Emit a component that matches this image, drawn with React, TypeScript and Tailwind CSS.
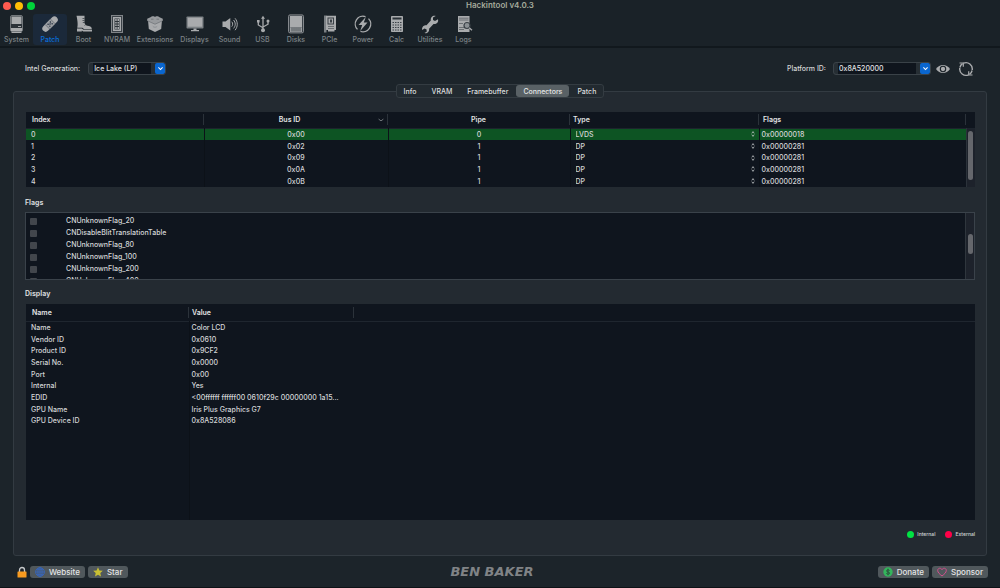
import { useState } from "react";
import type { ReactNode } from "react";
import { clsx } from "clsx";

const toolbarItems = [
  { label: "System", width: "w-[33px]", icon: <SystemIcon /> },
  { label: "Patch", width: "w-[34px]", icon: <PatchIcon /> },
  { label: "Boot", width: "w-[33px]", icon: <BootIcon /> },
  { label: "NVRAM", width: "w-[34px]", icon: <NvramIcon /> },
  { label: "Extensions", width: "w-[42px]", icon: <ExtensionsIcon /> },
  { label: "Displays", width: "w-[37px]", icon: <DisplaysIcon /> },
  { label: "Sound", width: "w-[33px]", icon: <SoundIcon /> },
  { label: "USB", width: "w-[33px]", icon: <UsbIcon /> },
  { label: "Disks", width: "w-[34px]", icon: <DisksIcon /> },
  { label: "PCIe", width: "w-[33px]", icon: <PcieIcon /> },
  { label: "Power", width: "w-[34px]", icon: <PowerIcon /> },
  { label: "Calc", width: "w-[33px]", icon: <CalcIcon /> },
  { label: "Utilities", width: "w-[34px]", icon: <UtilitiesIcon /> },
  { label: "Logs", width: "w-[33px]", icon: <LogsIcon /> },
];

const tabs = ["Info", "VRAM", "Framebuffer", "Connectors", "Patch"];

const connectors = [
  { index: 0, busId: "0x00", pipe: 0, type: "LVDS", flags: "0x00000018" },
  { index: 1, busId: "0x02", pipe: 1, type: "DP", flags: "0x00000281" },
  { index: 2, busId: "0x09", pipe: 1, type: "DP", flags: "0x00000281" },
  { index: 3, busId: "0x0A", pipe: 1, type: "DP", flags: "0x00000281" },
  { index: 4, busId: "0x0B", pipe: 1, type: "DP", flags: "0x00000281" },
];

const flags = [
  "CNUnknownFlag_20",
  "CNDisableBlitTranslationTable",
  "CNUnknownFlag_80",
  "CNUnknownFlag_100",
  "CNUnknownFlag_200",
  "CNUnknownFlag_400",
];

const displayInfo = [
  ["Name", "Color LCD"],
  ["Vendor ID", "0x0610"],
  ["Product ID", "0x9CF2"],
  ["Serial No.", "0x0000"],
  ["Port", "0x00"],
  ["Internal", "Yes"],
  ["EDID", "<00ffffff ffffff00 0610f29c 00000000 1a15..."],
  ["GPU Name", "Iris Plus Graphics G7"],
  ["GPU Device ID", "0x8A528086"],
];

function Glyph({ children }: { children: ReactNode }) {
  return (
    <svg viewBox="0 0 20 20" className="h-5 w-5" fill="#a9abad" aria-hidden="true">
      {children}
    </svg>
  );
}

function SystemIcon() {
  return (
    <Glyph>
      <rect x="3.5" y="1.5" width="12" height="16" rx="1.5" fill="#2b3238" stroke="#73787c" />
      <rect x="4.500" y="2.500" width="10" height="7.500" />
      <rect x="11" y="12" width="3" height="1" />
      <rect x="4" y="14" width="11" height="3" />
      <rect x="4.500" y="18" width="10" height="1" />
    </Glyph>
  );
}

function PatchIcon() {
  return (
    <Glyph>
      <g transform="rotate(-45 10 10)">
        <rect x="0.5" y="6.8" width="19" height="6.6" rx="3.2" />
        <rect x="6.2" y="6.8" width="7.6" height="6.6" fill="#9a9da1" />
        <path d="M6.2 6.8v6.6M13.8 6.8v6.6" stroke="#5d656e" strokeWidth="0.7" />
        <g fill="#1f2b3d">
          <circle cx="8.4" cy="8.9" r="0.7" />
          <circle cx="11.6" cy="8.9" r="0.7" />
          <circle cx="10" cy="10.1" r="0.7" />
          <circle cx="8.4" cy="11.4" r="0.7" />
          <circle cx="11.6" cy="11.4" r="0.7" />
        </g>
      </g>
    </Glyph>
  );
}

function BootIcon() {
  return (
    <Glyph>
      <path d="M2.5 1.800h8v7.2c.6 2 2 2.8 4.5 3 1.8.3 2.8 1.500 2.800 3.300h-7.500l-2-1.500H3.300c.6-3 .5-6-.8-12z" />
      <path d="M3 14.500h4.800l1.800 1.300H18v1.600H9.300l-1.500-1v1H3z" />
      <path d="M10.500 4.500h-2M10.500 6.500h-2M10.800 8.500h-2M11.800 10.500l-1.300 1" stroke="#2b3238" strokeWidth="0.700" />
    </Glyph>
  );
}

function NvramIcon() {
  return (
    <Glyph>
      <rect x="4.500" y="1.500" width="11" height="17" fill="#3a4147" stroke="#808488" />
      <path d="M6 3h8v14H6z" />
      <path d="M7.500 4.500h5v11h-5z" fill="#2b3238" />
      <path d="M8.200 5h1.500v2H8.200zM10.500 5H12v2h-1.500zM8.200 8h1.500v1.500H8.200zM10.500 8H12v1.500h-1.500zM8.200 10.500h1.500V12H8.200zM10.500 10.500H12V12h-1.500zM8.200 13h1.500v2H8.200zM10.500 13H12v2h-1.500z" />
    </Glyph>
  );
}

function ExtensionsIcon() {
  return (
    <Glyph>
      <path d="M3 6l7 3 7-3-.8 9L10 18l-6.200-3z" />
      <path d="M2.200 4.800l3.300-1.600L7 2.200h2l1 .8 1-.8h2l1.500 1 3.300 1.600v2L10 10.200 2.200 6.800z" fill="#989b9e" />
      <path d="M2.600 6.900L10 10.200l7.400-3.300" fill="none" stroke="#6b7074" strokeWidth="0.700" />
      <path d="M6 5.200h2.500M11.500 5.200H14" stroke="#6b7074" strokeWidth="0.800" />
      <path d="M7.800 12.300c1 1.300 3.400 1.300 4.400 0" fill="none" stroke="#858a8e" strokeWidth="0.800" />
    </Glyph>
  );
}

function DisplaysIcon() {
  return (
    <Glyph>
      <rect x="1.500" y="2.500" width="17" height="12" rx="0.800" fill="#7b8084" />
      <rect x="2.800" y="3.700" width="14.400" height="9" />
      <path d="M8.500 14.500h3v1.500h2.500v1.200H6V16h2.500z" />
    </Glyph>
  );
}

function SoundIcon() {
  return (
    <Glyph>
      <path d="M2.500 7.500h3L10.300 4v12.500L5.500 13h-3z" />
      <g fill="none" stroke="#a9abad" strokeWidth="1" strokeLinecap="round">
        <path d="M12 8c1 1.300 1 3 0 4.300" />
        <path d="M13.800 6.300c2 2.300 2 5.500 0 7.800" />
        <path d="M15.300 4.600c2.700 3.300 2.700 8 0 11.300" />
      </g>
    </Glyph>
  );
}

function UsbIcon() {
  return (
    <Glyph>
      <path d="M10 1.800l2 3H8zM4 6h2.600v2.600H4z" />
      <circle cx="15" cy="7" r="1.500" />
      <circle cx="10" cy="16.200" r="2" />
      <path d="M10 4v12M10 13.800L5.300 11V7.500M10 13l5-2.800V7" fill="none" stroke="#a9abad" strokeWidth="1.300" />
    </Glyph>
  );
}

function DisksIcon() {
  return (
    <Glyph>
      <rect x="2.500" y="0.900" width="15" height="18" rx="1.500" fill="#3a4147" stroke="#85898d" />
      <rect x="4" y="2" width="12" height="11.500" />
      <path d="M4 13.500h12v4.500H4z" fill="#9a9da0" />
      <path d="M6 13.500v4M8 13.500v4M10 13.500v4M12 13.500v4M14 13.500v4" stroke="#3a4147" strokeWidth="0.800" />
    </Glyph>
  );
}

function PcieIcon() {
  return (
    <Glyph>
      <path d="M4 1.500h2.500v17H4z" fill="#7b8084" />
      <path d="M6 1.800h10V16h-1.500v1.500H8V16H6z" />
      <rect x="8" y="4" width="5.500" height="6" fill="none" stroke="#3a4147" />
      <rect x="10" y="5.500" width="2" height="3" fill="#3a4147" />
      <path d="M8 12.500h6M8 14.500h6" stroke="#5a6065" strokeWidth="0.800" />
    </Glyph>
  );
}

function PowerIcon() {
  return (
    <Glyph>
      <path d="M12.500 2.700a7.700 7.700 0 0 0-8 12.700M7.500 17.300a7.700 7.700 0 0 0 8-12.700" fill="none" stroke="#a9abad" strokeWidth="1.300" />
      <path d="M12.800 3L5.500 11h3.700l-2 6 7.300-8.500h-3.700z" />
    </Glyph>
  );
}

function CalcIcon() {
  return (
    <Glyph>
      <rect x="4" y="2" width="12" height="16" rx="0.800" />
      <rect x="5.500" y="3.500" width="9" height="2" fill="#2b3238" />
      <path d="M5.500 8.500h9M5.500 11h9M5.500 13.500h9M5.500 16h9" stroke="#3a4147" strokeWidth="1" strokeDasharray="1.500 1" />
    </Glyph>
  );
}

function UtilitiesIcon() {
  return (
    <Glyph>
      <path d="M18 5.300l-3 1.800-2-1.200L13 3.600 15.700 2c-2.700-.8-5.400 1.200-4.900 4.600l-4.300 4.600c-2.900-.4-5 2-4.300 4.700l2.400-1.500 2 1.100.1 2.300-2.300 1.300c2.800.6 5.200-1.600 4.700-4.400l4.400-4.700c2.900.4 5.300-1.700 4.500-4.700z" />
    </Glyph>
  );
}

function LogsIcon() {
  return (
    <Glyph>
      <rect x="4" y="2" width="11.500" height="16" />
      <path d="M5 4.200h9.500M5 6h9.500M5 9.500h4M5 13.500h5M5 15.500h5" stroke="#5a6065" strokeWidth="0.800" />
      <circle cx="13" cy="11.500" r="3" fill="#8b9094" stroke="#3a4147" strokeWidth="1.200" />
      <path d="M15.200 13.800l2.800 2.500" stroke="#a9abad" strokeWidth="1.300" />
    </Glyph>
  );
}

function ComboBox({ id, value, className }: { id: string; value: string; className: string }) {
  return (
    <div
      className={clsx(
        "relative flex h-[13px] items-center rounded-[3px] border border-[#3a4248] bg-[#262e34] pl-[4px]",
        className
      )}
    >
      <select
        id={id}
        defaultValue={value}
        className="h-[11px] w-full appearance-none bg-[linear-gradient(to_left,#262e34_14px,#0f151d_14px)] pl-px text-[7px] leading-[11px] text-[#e2e3e4] outline-none"
      >
        <option>{value}</option>
      </select>
      <span className="pointer-events-none absolute right-0 top-0 flex h-[11px] w-[10px] items-center justify-center rounded-[2px] bg-[#0a66cf]">
        <svg viewBox="0 0 10 10" className="h-[7px] w-[7px]" fill="none" stroke="#fff" strokeWidth="1.500">
          <path d="M2 3.500l3 3 3-3" />
        </svg>
      </span>
    </div>
  );
}

function FooterButton({ icon, children }: { icon: ReactNode; children: ReactNode }) {
  return (
    <button className="flex h-3 items-center gap-[4px] rounded-[3px] bg-[#50585c] px-[5px] text-[8px] leading-3 text-[#e4e5e6]">
      {icon}
      {children}
    </button>
  );
}

function ConnectorTable() {
  const [selected, setSelected] = useState(0);

  return (
    <table className="w-full table-fixed border-collapse bg-[#0f151e]">
      <colgroup>
        <col className="w-[178px]" />
        <col className="w-[184px]" />
        <col className="w-[182px]" />
        <col className="w-[189px]" />
        <col />
        <col className="w-[9px]" />
      </colgroup>
      <thead>
        <tr className="h-[16px] border-b border-[#1d242d] text-left text-[#e2e3e4] [&>th]:p-0 [&>th]:font-semibold">
          <th>
            <div className="border-r border-[#2b323a] pl-[6px]">Index</div>
          </th>
          <th>
            <div className="flex items-center border-r border-[#2b323a] pr-[3px]">
              <span className="flex-1 pr-[3px] text-center">Bus ID</span>
              <svg viewBox="0 0 10 10" className="h-[6px] w-[6px]" fill="none" stroke="#8b9094" strokeWidth="1.300">
                <path d="M1 3.500l4 3 4-3" />
              </svg>
            </div>
          </th>
          <th>
            <div className="border-r border-[#2b323a] text-center">Pipe</div>
          </th>
          <th>
            <div className="border-r border-[#2b323a] pl-[3px]">Type</div>
          </th>
          <th>
            <div className="border-r border-[#2b323a] pl-[4px]">Flags</div>
          </th>
          <th aria-label="Scroll" />
        </tr>
      </thead>
      <tbody className="[&>tr:nth-child(3n)]:h-[11px]">
        {connectors.map((row, i) => (
          <tr
            key={row.index}
            onClick={() => setSelected(i)}
            className={clsx(
              "h-[12px] [&>td]:p-0 [&>td]:leading-[11px]",
              selected === i && "bg-[#0d5423]"
            )}
          >
            <td className="border-r border-[#0c1118]">
              <div className="pl-[5px]">{row.index}</div>
            </td>
            <td className="border-r border-[#0c1118] text-center">{row.busId}</td>
            <td className="border-r border-[#0c1118] text-center">{row.pipe}</td>
            <td className="border-r border-[#0c1118]">
              <div className="flex items-center pl-[5px] pr-[4px]">
                <select
                  aria-label={`Type of connector ${row.index}`}
                  defaultValue={row.type}
                  className="h-[11px] flex-1 appearance-none bg-transparent text-[7px] leading-[11px] outline-none"
                >
                  <option>{row.type}</option>
                </select>
                <svg viewBox="0 0 6 10" className="h-[6px] w-[4px]" fill="none" stroke="#c4c7c9" strokeWidth="1.300">
                  <path d="M1 4l2-3 2 3M1 6l2 3 2-3" />
                </svg>
              </div>
            </td>
            <td>
              <div className="pl-[2px]">{row.flags}</div>
            </td>
            {i === 0 && (
              <td rowSpan={5} className="border-l border-[#2b323a] bg-[#1d222b] align-top">
                <div className="mx-auto mt-[2px] h-[49px] w-[5px] rounded-full bg-[#65676c]" />
              </td>
            )}
          </tr>
        ))}
      </tbody>
    </table>
  );
}

function DisplayTable() {
  return (
    <div className="flex flex-1 flex-col bg-[#0f151e]">
      <table className="w-full table-fixed border-collapse">
        <colgroup>
          <col className="w-[163px]" />
          <col className="w-[165px]" />
          <col />
        </colgroup>
        <thead>
          <tr className="h-[17px] border-b border-[#1f262f] text-left text-[#e2e3e4] [&>th]:p-0 [&>th]:font-semibold">
            <th>
              <div className="border-r border-[#2b323a] pl-[6px]">Name</div>
            </th>
            <th>
              <div className="border-r border-[#2b323a] pl-[3px]">Value</div>
            </th>
            <th aria-label="Empty" />
          </tr>
        </thead>
        <tbody className="[&>tr:nth-child(3n)]:h-[11px]">
          {displayInfo.map(([name, value]) => (
            <tr key={name} className="h-[12px] [&>td]:p-0 [&>td]:leading-[11px]">
              <td className="border-r border-[#0c1118]">
                <div className="pl-[5px]">{name}</div>
              </td>
              <td>
                <div className="truncate pl-[2px]">{value}</div>
              </td>
              <td />
            </tr>
          ))}
        </tbody>
      </table>
      <div className="w-[164px] flex-1 border-r border-[#0c1118]" />
    </div>
  );
}

export default function App() {
  const [activeItem, setActiveItem] = useState("Patch");
  const [activeTab, setActiveTab] = useState("Connectors");

  return (
    <div className="flex min-h-screen flex-col border-b border-[#0d1216] bg-[#1c242a] font-['Inter','Liberation_Sans',sans-serif] text-[7px] font-medium leading-[11px] text-[#d4d6d8]">
      {/* Title bar and toolbar */}
      <header className="border-b-2 border-[#11181d] bg-[#1a2228]">
        <div className="grid h-[11px] grid-cols-3 items-center">
          <div className="flex gap-1 pl-[3px]">
            <button aria-label="Close" className="h-2 w-2 rounded-full bg-[#ff5b50]" />
            <button aria-label="Minimize" className="h-2 w-2 rounded-full bg-[#ffbd05]" />
            <button aria-label="Zoom" className="h-2 w-2 rounded-full bg-[#00d43a]" />
          </div>
          <h1 className="text-center text-[8px] font-semibold text-[#a4aa9b]">Hackintool v4.0.3</h1>
        </div>
        <nav className="flex pb-px pt-[3px]">
          {toolbarItems.map((item) => (
            <button
              key={item.label}
              onClick={() => setActiveItem(item.label)}
              className={clsx(
                "flex h-[31px] flex-col items-center rounded-[3px] text-[7px] leading-[11px]",
                item.width,
                activeItem === item.label ? "bg-[#1b293a] text-[#0a6fdb]" : "text-[#7d8387]"
              )}
            >
              {item.icon}
              {item.label}
            </button>
          ))}
        </nav>
      </header>

      <main className="flex flex-1 flex-col px-[13px]">
        <div className="flex items-center justify-between pb-[9px] pl-3 pr-[13px] pt-[14px]">
          <div className="flex items-center gap-[8px]">
            <label htmlFor="generation">Intel Generation:</label>
            <ComboBox id="generation" value="Ice Lake (LP)" className="w-[78px]" />
          </div>
          <div className="flex items-center">
            <label htmlFor="platform" className="pr-[7px]">Platform ID:</label>
            <ComboBox id="platform" value="0x8A520000" className="w-[98px]" />
            <button aria-label="Show" className="ml-[5px]">
              <svg viewBox="0 0 14 10" className="h-[10px] w-[14px]">
                <path d="M0 5c3.500-5.300 10.500-5.300 14 0-3.500 5.300-10.500 5.300-14 0z" fill="#a9abad" />
                <circle cx="7" cy="5" r="2.700" fill="#a9abad" stroke="#1c242a" strokeWidth="1.100" />
              </svg>
            </button>
            <button aria-label="Refresh" className="-my-1 ml-[8px]">
              <svg viewBox="0 0 16 16" className="h-4 w-4" fill="none" stroke="#a9abad" strokeWidth="1.400">
                <path d="M5.500 2.200A6.300 6.300 0 0 1 14.200 9M1.800 7a6.300 6.300 0 0 0 8.700 6.800" />
                <path d="M1.900 6.500A6.300 6.300 0 0 1 4.500 2.700M14.100 9.500a6.300 6.300 0 0 1-2.600 3.800" />
                <path d="M1.500 2h3.800v3.800M14.500 14h-3.800v-3.800" strokeWidth="1.200" />
              </svg>
            </button>
          </div>
        </div>

        {/* Tab strip sits across the panel's top edge */}
        <div role="tablist" className="z-10 -mb-[7px] flex h-[14px] gap-px self-center rounded-[3px] border border-[#343c42] bg-[#222a30]">
          {tabs.map((tab) => (
            <button
              key={tab}
              role="tab"
              aria-selected={activeTab === tab}
              onClick={() => setActiveTab(tab)}
              className={clsx(
                "rounded-[3px] px-[7px] leading-[11px]",
                activeTab === tab ? "bg-[#596165] text-[#e4e5e6]" : "text-[#dcdedf]"
              )}
            >
              {tab}
            </button>
          ))}
        </div>

        <section className="flex flex-1 flex-col rounded-[3px] border border-[#333b42] bg-[#232a31] px-[11px] pt-[20px]">
          <div className="pl-px">
            <ConnectorTable />
          </div>

          <h2 className="pb-[4px] pt-[10px] font-bold">Flags</h2>
          <div className="flex h-[68px] overflow-hidden border border-[#3a424a] bg-[#0f151e]">
            <ul className="flex-1 pt-[2px]">
              {flags.map((flag) => (
                <li key={flag} className="h-[12px]">
                  <label className="flex items-center pl-1 leading-[12px]">
                    <input type="checkbox" className="mr-[29px] h-[7px] w-[7px] appearance-none rounded-[1px] bg-[#42464c] checked:bg-[#0a66cf]" />
                    {flag}
                  </label>
                </li>
              ))}
            </ul>
            <div className="w-[9px] border-l border-[#2f363d] bg-[#1d222b] pt-[21px]">
              <div className="mx-auto h-[20px] w-[5px] rounded-full bg-[#65676c]" />
            </div>
          </div>

          <h2 className="pb-[5px] pt-[8px] font-bold">Display</h2>
          <div className="flex flex-1 pl-px">
            <DisplayTable />
          </div>

          <div className="flex h-[35px] items-center justify-end gap-[10px] pb-[6px] text-[5px]">
            <span className="flex items-center gap-[3px]">
              <span className="h-[7px] w-[7px] rounded-full bg-[#00e343]" />
              Internal
            </span>
            <span className="flex items-center gap-[3px]">
              <span className="h-[7px] w-[7px] rounded-full bg-[#ff0048]" />
              External
            </span>
          </div>
        </section>
      </main>

      <footer className="grid h-[31px] grid-cols-3 items-center px-3">
        <div className="flex items-center gap-[3px] pl-[5px]">
          <svg viewBox="0 0 10 12" className="h-3 w-[10px]" aria-hidden="true">
            <path d="M2.500 6V4a2.500 2.500 0 0 1 5 0v2" fill="none" stroke="#c6c9cb" strokeWidth="1.300" />
            <rect x="0.500" y="5.500" width="9" height="6" rx="0.500" fill="#f79a1f" />
          </svg>
          <FooterButton
            icon={
              <svg viewBox="0 0 10 10" className="h-[10px] w-[10px]" fill="none" stroke="#3767bd" strokeWidth="0.900">
                <circle cx="5" cy="5" r="4.400" />
                <ellipse cx="5" cy="5" rx="2.100" ry="4.400" />
                <path d="M5 .6v8.800M.6 5h8.800M1.300 2.700h7.400M1.300 7.300h7.400" />
              </svg>
            }
          >
            Website
          </FooterButton>
          <FooterButton
            icon={
              <svg viewBox="0 0 10 10" className="h-[10px] w-[10px]" fill="#c9c033">
                <path d="M5 .3l1.400 3.100 3.400.4-2.500 2.300.7 3.400L5 7.800 2 9.500l.7-3.400L.2 3.800l3.400-.4z" />
              </svg>
            }
          >
            Star
          </FooterButton>
        </div>
        <p className="pr-4 text-center font-['DejaVu_Sans',sans-serif] text-[13px] font-bold italic leading-3 text-[#808386]">
          BEN BAKER
        </p>
        <div className="flex justify-end gap-[3px]">
          <FooterButton
            icon={
              <svg viewBox="0 0 10 10" className="h-[10px] w-[10px]">
                <circle cx="5" cy="5" r="4.700" fill="#33b55c" />
                <path d="M6.600 3.500C5.800 2.600 3.500 2.700 3.500 4c0 1.400 3.200.7 3.200 2.100 0 1.300-2.500 1.400-3.400.3M5 1.700v6.600" fill="none" stroke="#2c4a3a" strokeWidth="0.900" />
              </svg>
            }
          >
            Donate
          </FooterButton>
          <FooterButton
            icon={
              <svg viewBox="0 0 10 10" className="h-[10px] w-[10px]" fill="none" stroke="#d4508f" strokeWidth="1">
                <path d="M5 9C2.500 7 .7 5.500.7 3.400.7 1 3.900.4 5 2.600 6.100.4 9.300 1 9.300 3.400 9.300 5.500 7.500 7 5 9z" />
              </svg>
            }
          >
            Sponsor
          </FooterButton>
        </div>
      </footer>
    </div>
  );
}
